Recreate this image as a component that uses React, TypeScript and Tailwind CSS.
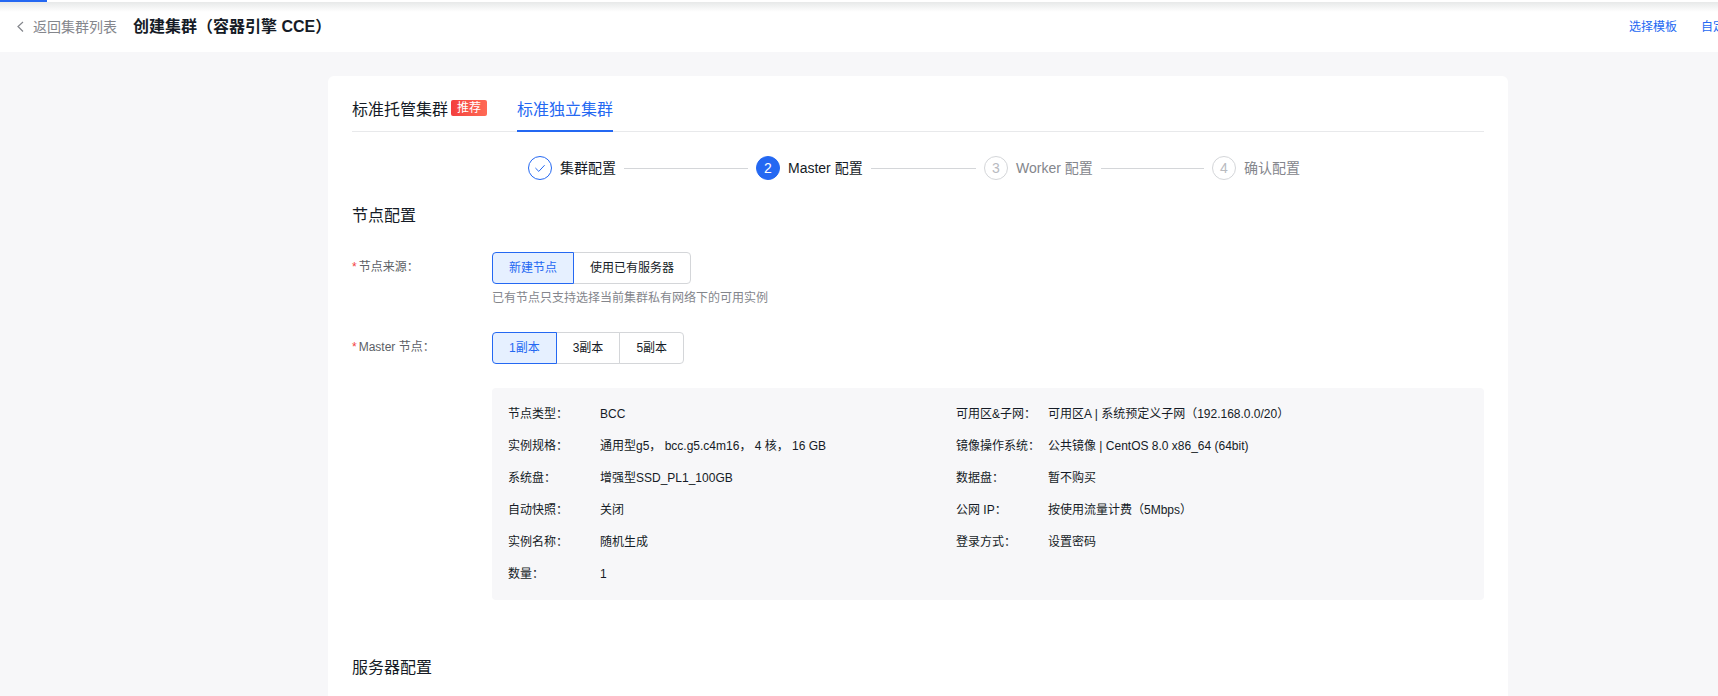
import { useState } from 'react';
import clsx from 'clsx';

const steps = ['集群配置', 'Master 配置', 'Worker 配置', '确认配置'];
const currentStep = 1;

const leftInfo = [
  ['节点类型：', 'BCC'],
  ['实例规格：', '通用型g5， bcc.g5.c4m16， 4 核， 16 GB'],
  ['系统盘：', '增强型SSD_PL1_100GB'],
  ['自动快照：', '关闭'],
  ['实例名称：', '随机生成'],
  ['数量：', '1'],
];

const rightInfo = [
  ['可用区&子网：', '可用区A | 系统预定义子网（192.168.0.0/20）'],
  ['镜像操作系统：', '公共镜像 | CentOS 8.0 x86_64 (64bit)'],
  ['数据盘：', '暂不购买'],
  ['公网 IP：', '按使用流量计费（5Mbps）'],
  ['登录方式：', '设置密码'],
];

function BackIcon() {
  return (
    <svg viewBox="0 0 16 16" className="size-4" fill="none" stroke="currentColor" strokeWidth="1.2" aria-hidden="true">
      <path d="M10 3 5 7.5l5 5" />
    </svg>
  );
}

function CheckIcon() {
  return (
    <svg viewBox="0 0 12 12" className="size-3" fill="none" stroke="currentColor" strokeWidth="1" aria-hidden="true">
      <path d="M1.4 6 4.8 9.4 10.6 3.2" />
    </svg>
  );
}

function Steps() {
  return (
    <ol className="mx-auto mt-6 flex max-w-[780px] text-sm">
      {steps.map((label, idx) => {
        const done = idx < currentStep;
        const active = idx === currentStep;
        const last = idx === steps.length - 1;
        return (
          <li key={label} className={clsx('flex items-center gap-2 pr-2', !last && 'flex-1')}>
            <span
              className={clsx(
                'flex size-6 shrink-0 items-center justify-center rounded-full border',
                done && 'border-[#2468f2] text-[#2468f2]',
                active && 'border-[#2468f2] bg-[#2468f2] text-white',
                !done && !active && 'border-[#d4d6d9] text-[#b8babf]'
              )}
            >
              {done ? <CheckIcon /> : idx + 1}
            </span>
            <span className={clsx('whitespace-nowrap', done || active ? 'text-[#151b26]' : 'text-[#84868c]')}>
              {label}
            </span>
            {!last && <span className="h-px flex-1 bg-[#d4d6d9]" />}
          </li>
        );
      })}
    </ol>
  );
}

function FormRow({ label, children }: { label: string; children: React.ReactNode }) {
  return (
    <div className="flex">
      <div className="flex h-[30px] w-[140px] shrink-0 items-center text-[#5c5f66]">
        <span className="mr-0.5 text-[#f33e3e]">*</span>
        {label}
      </div>
      <div className="min-w-0 flex-1">{children}</div>
    </div>
  );
}

function ButtonGroup({ label, options }: { label: string; options: string[] }) {
  const [selected, setSelected] = useState(options[0]);
  return (
    <div role="group" aria-label={label} className="flex">
      {options.map((option) => (
        <button
          key={option}
          type="button"
          aria-pressed={option === selected}
          onClick={() => setSelected(option)}
          className={clsx(
            '-ml-px h-8 border px-4 whitespace-nowrap first:ml-0 first:rounded-l last:rounded-r',
            option === selected
              ? 'z-10 border-[#2468f2] bg-[#e6f0ff] text-[#2468f2]'
              : 'border-[#d4d6d9] bg-white text-[#151b26]'
          )}
        >
          {option}
        </button>
      ))}
    </div>
  );
}

function InfoList({ items }: { items: string[][] }) {
  return (
    <dl className="flex flex-col gap-3">
      {items.map(([name, value]) => (
        <div key={name} className="flex leading-5">
          <dt className="w-[92px] shrink-0 whitespace-nowrap">{name}</dt>
          <dd>{value}</dd>
        </div>
      ))}
    </dl>
  );
}

export default function App() {
  return (
    <div
      lang="zh-CN"
      className="min-h-screen overflow-hidden bg-[#f7f7f9] font-['Liberation_Sans','Noto_Sans_CJK_SC',sans-serif] text-xs text-[#151b26]"
    >
      {/* Loading bar */}
      <div className="h-0.5 bg-white">
        <div className="h-full w-[47px] bg-[#2468f2]" />
      </div>

      <header className="flex h-[50px] items-center bg-white bg-linear-to-b from-[#e7e9e9] to-white to-[10px] pl-[13px]">
        <a href="#list" className="flex items-center gap-1 text-sm text-[#84868c]">
          <BackIcon />
          返回集群列表
        </a>
        <h1 className="ml-4 text-base font-semibold">创建集群（容器引擎 CCE）</h1>
        <nav className="-mr-[19px] ml-auto flex gap-6 whitespace-nowrap text-[#2468f2]">
          <a href="#template">选择模板</a>
          <a href="#custom">自定义</a>
        </nav>
      </header>

      <main className="pt-6 pl-[118px]">
        <div className="mx-auto max-w-[1180px] rounded-t-md bg-white p-6 pb-4">
          {/* Cluster type */}
          <div role="tablist" className="flex h-8 gap-[30px] border-b border-[#e8e9eb] text-base leading-5">
            <button type="button" role="tab" aria-selected="false" className="flex items-start gap-[3px]">
              标准托管集群
              <span className="h-4 rounded-xs bg-linear-to-r from-[#f33e3e] to-[#ff6a55] px-1.5 text-xs leading-4 text-white">
                推荐
              </span>
            </button>
            <button
              type="button"
              role="tab"
              aria-selected="true"
              className="-mb-px flex items-start border-b-2 border-[#2468f2] text-[#2468f2]"
            >
              标准独立集群
            </button>
          </div>

          <Steps />

          <h2 className="mt-6 text-base">节点配置</h2>

          <div className="mt-6 flex flex-col gap-6">
            <FormRow label="节点来源：">
              <ButtonGroup label="节点来源" options={['新建节点', '使用已有服务器']} />
              <p className="mt-1 leading-5 text-[#84868c]">已有节点只支持选择当前集群私有网络下的可用实例</p>
            </FormRow>

            <FormRow label="Master 节点：">
              <ButtonGroup label="Master 节点" options={['1副本', '3副本', '5副本']} />
              <div className="mt-6 grid grid-cols-2 rounded bg-[#f7f7f9] py-4 pr-20 pl-4">
                <InfoList items={leftInfo} />
                <InfoList items={rightInfo} />
              </div>
            </FormRow>
          </div>

          <h2 className="mt-14 text-base">服务器配置</h2>
        </div>
      </main>
    </div>
  );
}
